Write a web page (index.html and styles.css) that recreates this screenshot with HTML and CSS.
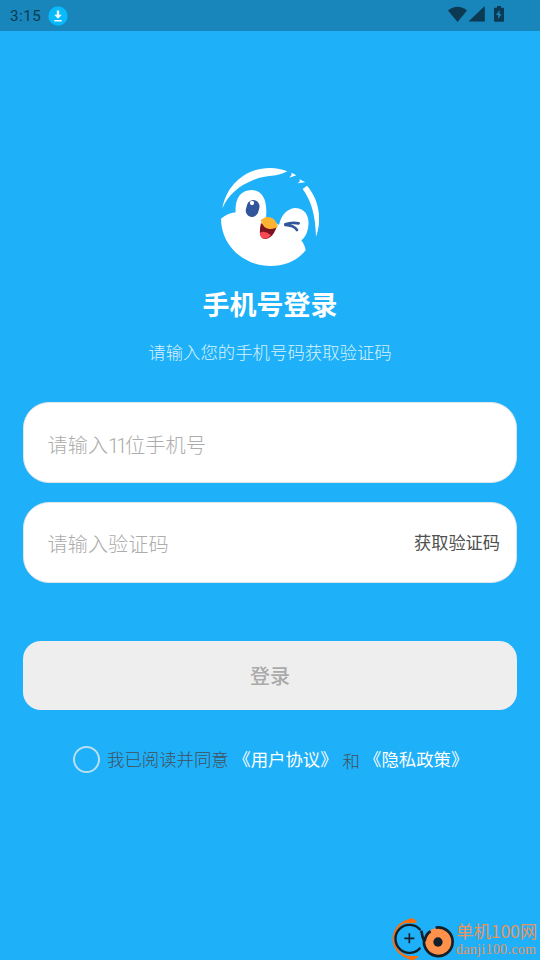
FILE: index.html
```html
<!DOCTYPE html>
<html lang="zh-CN">
<head>
<meta charset="utf-8">
<title>手机号登录</title>
<link rel="stylesheet" href="styles.css">
</head>
<body>
<header class="status">
  <span class="time">3:15</span>
  <svg class="download" width="20" height="20" viewBox="0 0 20 20"><circle cx="10" cy="10" r="9.7" fill="#08b9fb"/><path d="M8.800 4.500h2.400v4.200h2.700L10 12.800 6.100 8.700h2.700zM6.300 13.900h7.400v1.600H6.300z" fill="#eefaff"/></svg>
  <svg class="signals" width="60" height="20" viewBox="0 0 60 20" fill="#0b3a52"><path d="M0 5.500Q9.500-2 19 5.500L9.500 17z"/><path d="M36.800 1v15.600H20.500z"/><path d="M47 2.800h2V1h4v1.800h2q1 0 1 1v12q0 1-1 1h-8q-1 0-1-1v-12q0-1 1-1z"/><path d="M51.500 5l-3.500 5h2.200v4l3.300-5h-2z" fill="#1a86bc"/></svg>
</header>
<main class="login">
  <svg class="logo" width="98" height="98" viewBox="33 24 294 294">
    <g fill="#fff">
      <path d="M37 145C50 75 105 24 180 24c20 0 38 4 52 10-30 18-62 10-102 26-45 18-75 45-93 85z"/>
      <path d="M245 38l14 8-21 7 6-7zM269 58l17 9-24 3 7-5zM278 87l13-10c34 38 47 98 27 153-2-65-13-105-40-143z"/>
      <path d="M33 176Q52 160 77 157C74 120 90 90 124 90c36 0 49 34 44 82l39 23c8-35 28-50 50-51 33 2 43 31 37 61-4 20-12 30-20 36 6 9 11 17 13 30-25 31-62 47-105 47C100 318 33 255 33 176z"/>
    </g>
    <rect x="109" y="120" width="38" height="51" rx="19" transform="rotate(15 128 145)" fill="#30559b"/>
    <circle cx="126" cy="129" r="6.500" fill="#fff"/>
    <path d="M153 190l47 10c-8 25-23 40-40 36-13-4-12-26-7-46z" fill="#7b1420"/>
    <path d="M150 218q16-8 33 8-11 12-23 10-9-4-10-18z" fill="#fc4a55"/>
    <path d="M152 180l16-9q20-1 28 12l8 16q-9 9-26 8-18-1-26-27z" fill="#ffb333"/>
    <path d="M226 193q19-7 40-3M226 195q26 1 35 15" fill="none" stroke="#30559b" stroke-width="8" stroke-linecap="round"/>
  </svg>
  <h1>手机号登录</h1>
  <p class="hint">请输入您的手机号码获取验证码</p>
  <div class="field phone"><span>请输入<i>11</i>位手机号</span></div>
  <div class="field code"><span>请输入验证码</span><button>获取验证码</button></div>
  <div class="submit">登录</div>
  <div class="terms"><span class="check"></span><span class="agree">我已阅读并同意</span><span class="link first">《用户协议》</span><span class="and">和</span><span class="link">《隐私政策》</span></div>
</main>
<footer class="brand">
  <svg width="66" height="42" viewBox="15 18 198 126" fill="none">
    <path d="M74 25C10 38 10 122 72 136" stroke="#ff6c08" stroke-width="6"/>
    <path d="M58 28Q75 18 84 19l13 10-8 4-30 1zM52 130l18 2 31 0q-8 13-24 12-13-3-25-14z" fill="#ff6c08"/>
    <path d="M106 54A42 42 0 1 0 106 107" stroke="#13202a" stroke-width="7"/>
    <path d="M58 79h30M73 64v30" stroke="#13202a" stroke-width="5"/>
    <circle cx="159" cy="90" r="42" fill="#ff914b"/>
    <path d="M109 56q2 18 10 34M119 86q5-22 18-28" stroke="#13202a" stroke-width="8"/>
    <path d="M152 47A43 43 0 1 1 119 76" stroke="#13202a" stroke-width="8"/>
    <circle cx="159" cy="90" r="14" fill="#13202a"/>
  </svg>
  <div class="brand-text"><b>单机100网</b><small>danji100.com</small></div>
</footer>
</body>
</html>
```
FILE: styles.css
```css
* { box-sizing: border-box; }
body {
  margin: 0;
  height: 960px;
  overflow: hidden;
  display: flex;
  flex-direction: column;
  background: #1eb0f8;
  font-family: "Noto Sans CJK SC", sans-serif;
  font-weight: 300;
}
.status {
  height: 31px;
  flex: none;
  display: flex;
  align-items: center;
  padding: 0 32px 0 10px;
  background: #1885bb;
}
.time {
  width: 38px;
  padding-top: 1px;
  font: 400 15px/30px Roboto, sans-serif;
  letter-spacing: 0.6px;
  color: #0b3a52;
}
.signals { margin-left: auto; margin-top: -1px; }
.login {
  flex: 1;
  padding: 137px 23px 0;
  display: flex;
  flex-direction: column;
  align-items: center;
}
.logo { flex: none; }
h1 {
  margin: 18px 0 0;
  font-size: 27px;
  line-height: 40px;
  font-weight: 700;
  color: #fff;
}
.hint {
  margin: 15px 0 0;
  font-size: 17.4px;
  line-height: 26px;
  color: #d8f2ff;
}
.field {
  width: 494px;
  height: 81px;
  display: flex;
  align-items: center;
  justify-content: space-between;
  padding: 3px 16px 0 23.5px;
  border: 1.5px solid #dfe6ea;
  border-radius: 26px;
  background: #fff;
  color: #acacac;
  font-size: 20.2px;
  line-height: 30px;
}
.field i {
  display: inline-block;
  width: 17px;
  font: 300 20px/24px Roboto, sans-serif;
  letter-spacing: -2.8px;
}
.phone { margin-top: 37px; padding-top: 5px; }
.code { margin-top: 19px; }
.field button {
  padding: 0;
  margin-top: -4px;
  border: 0;
  background: none;
  font: 400 17.2px/26px "Noto Sans CJK SC", sans-serif;
  color: #505050;
}
.submit {
  width: 494px;
  height: 69px;
  margin-top: 58px;
  border-radius: 18px;
  background: #eee;
  color: #aaa;
  font-size: 20px;
  line-height: 69px;
  font-weight: 500;
  text-align: center;
}
.terms {
  align-self: flex-start;
  display: flex;
  align-items: center;
  height: 28px;
  margin: 35px 0 0 50px;
  font-size: 17.4px;
  line-height: 26px;
  white-space: nowrap;
}
.check {
  width: 27px;
  height: 27px;
  border: 2px solid #b9dff2;
  border-radius: 50%;
}
.agree { margin-left: 7px; color: #434f59; }
.link { color: #fff; font-weight: 400; }
.first { margin-left: 4.5px; }
.and { margin: 4px 4px 0 5px; color: #434f59; }
.brand {
  position: absolute;
  right: 0;
  bottom: 0;
  width: 150px;
  height: 42px;
  display: flex;
  color: #e8945c;
}
.brand svg { flex: none; }
.brand-text { display: flex; flex-direction: column; white-space: nowrap; }
.brand-text b {
  font: 400 17.4px/25px "Noto Sans CJK SC", sans-serif;
}
.brand-text small {
  font: 400 14px/14px "Liberation Serif", serif;
  letter-spacing: 0.3px;
}
```
